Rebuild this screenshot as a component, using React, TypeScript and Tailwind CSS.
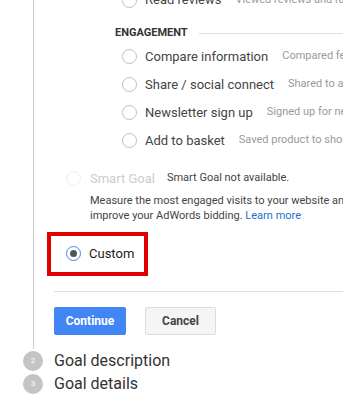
import React from "react";

type Item = { label: string; desc: string };

const engagement: Item[] = [
  { label: "Compare information", desc: "Compared features or prices" },
  { label: "Share / social connect", desc: "Shared to a social network" },
  { label: "Newsletter sign up", desc: "Signed up for newsletter" },
  { label: "Add to basket", desc: "Saved product to shopping cart" },
];

function Radio({ faded }: { faded?: boolean }) {
  return (
    <span
      className={
        faded
          ? "h-[15px] w-[15px] shrink-0 rounded-full border border-[#eeeeee]"
          : "h-[15px] w-[15px] shrink-0 rounded-full border border-[#bdbdbd]"
      }
    />
  );
}

function Row({ label, desc }: Item) {
  return (
    <div className="flex h-[28px] items-center whitespace-nowrap">
      <Radio />
      <span className="ml-[8px] text-[13px] text-[#444]">{label}</span>
      <span className="ml-[14px] text-[11px] text-[#999]">{desc}</span>
    </div>
  );
}

function Step({ n, label }: { n: number; label: string }) {
  return (
    <div className="flex h-[23px] items-center">
      <div className="ml-[23px] flex h-[20px] w-[20px] items-center justify-center rounded-full bg-[#c4c4c4] text-[8px] text-white">
        {n}
      </div>
      <span className="ml-[11px] text-[16px] text-[#333]">{label}</span>
    </div>
  );
}

export default function App() {
  return (
    <div className="relative h-[401px] w-[343px] overflow-hidden bg-white font-['Roboto',sans-serif]">
      <div className="ml-[33px] border-l border-[#cccccc] pb-[14px]">
        <div className="pl-[88px] pt-0">
          <div className="-mt-[14px]">
            <Row label="Read reviews" desc="Viewed reviews and ratings" />
          </div>
        </div>

        <div className="pl-[81px]">
          <div className="mt-[11px] flex items-center">
            <span className="text-[11px] font-bold text-[#333]">ENGAGEMENT</span>
            <span className="ml-[11px] h-px flex-1 bg-[#e0e0e0]" />
          </div>
          <div className="mt-[1px] pl-[7px]">
            {engagement.map((it) => (
              <Row key={it.label} {...it} />
            ))}
          </div>
        </div>

        <div className="pl-[32px] pt-[10px]">
          <div className="flex h-[28px] items-center whitespace-nowrap">
            <Radio faded />
            <span className="ml-[9px] text-[13px] text-[#cccccc]">Smart Goal</span>
            <span className="ml-[12px] text-[11px] text-[#444]">
              Smart Goal not available.
            </span>
          </div>
          <p className="pl-[24px] text-[11px] leading-[15px] text-[#444] whitespace-nowrap">
            Measure the most engaged visits to your website and use them to
            <br />
            improve your AdWords bidding.{" "}
            <span className="text-[#1a73c8]">Learn more</span>
          </p>
        </div>

        <div className="ml-[13px] mt-[9px] flex h-[44px] w-[101px] items-center border-4 border-[#e00000] pl-[15px]">
          <span className="flex h-[15px] w-[15px] shrink-0 items-center justify-center rounded-full border border-[#4285f4]">
            <span className="h-[7px] w-[7px] rounded-full bg-[#555]" />
          </span>
          <span className="ml-[8px] text-[13px] text-[#222]">Custom</span>
        </div>

        <div className="ml-[20px] mt-[15px] h-px bg-[#e0e0e0]" />

        <div className="ml-[20px] mt-[15px] flex gap-[19px]">
          <button className="h-[28px] w-[72px] rounded-[2px] bg-[#4285f4] text-[12px] font-bold text-white">
            Continue
          </button>
          <button className="h-[28px] w-[71px] rounded-[2px] border border-[#dcdcdc] bg-[#f5f5f5] text-[12px] font-bold text-[#444]">
            Cancel
          </button>
        </div>
      </div>

      <div className="mt-[1px]">
        <Step n={2} label="Goal description" />
        <Step n={3} label="Goal details" />
      </div>
      <div className="ml-[13px] mt-[5px] h-px bg-[#cccccc]" />
    </div>
  );
}
